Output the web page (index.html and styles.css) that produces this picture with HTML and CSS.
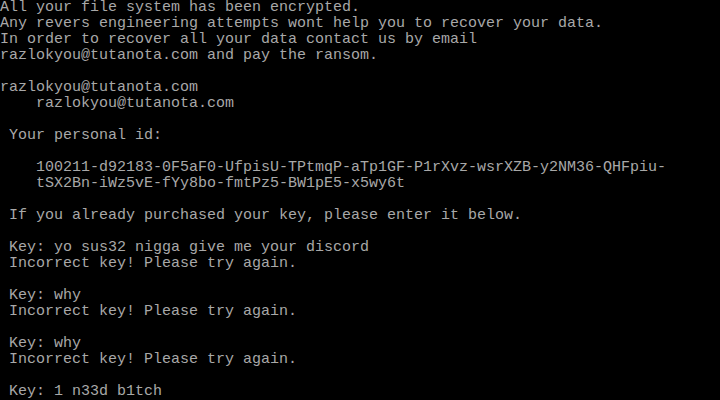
FILE: index.html
```html
<!DOCTYPE html>
<html lang="en">

<head>
    <meta charset="UTF-8">
    <meta name="viewport" content="width=device-width, initial-scale=1.0">
    <title>Console</title>
    <link rel="stylesheet" href="styles.css">
</head>

<body>
    <pre class="screen">All your file system has been encrypted.
Any revers engineering attempts wont help you to recover your data.
In order to recover all your data contact us by email
razlokyou@tutanota.com and pay the ransom.

razlokyou@tutanota.com
    razlokyou@tutanota.com

 Your personal id:

    100211-d92183-0F5aF0-UfpisU-TPtmqP-aTp1GF-P1rXvz-wsrXZB-y2NM36-QHFpiu-
    tSX2Bn-iWz5vE-fYy8bo-fmtPz5-BW1pE5-x5wy6t

 If you already purchased your key, please enter it below.

 Key: yo sus32 nigga give me your discord
 Incorrect key! Please try again.

 Key: why
 Incorrect key! Please try again.

 Key: why
 Incorrect key! Please try again.

 Key: 1 n33d b1tch</pre>
</body>

</html>
```

FILE: styles.css
```css
* {
    margin: 0;
    padding: 0;
}

body {
    width: 720px;
    height: 400px;
    overflow: hidden;
    background-color: #000;
}

.screen {
    font-family: "Liberation Mono", "DejaVu Sans Mono", monospace;
    font-size: 15px;
    line-height: 16px;
    color: #a8a8a8;
    white-space: pre;
}
```
